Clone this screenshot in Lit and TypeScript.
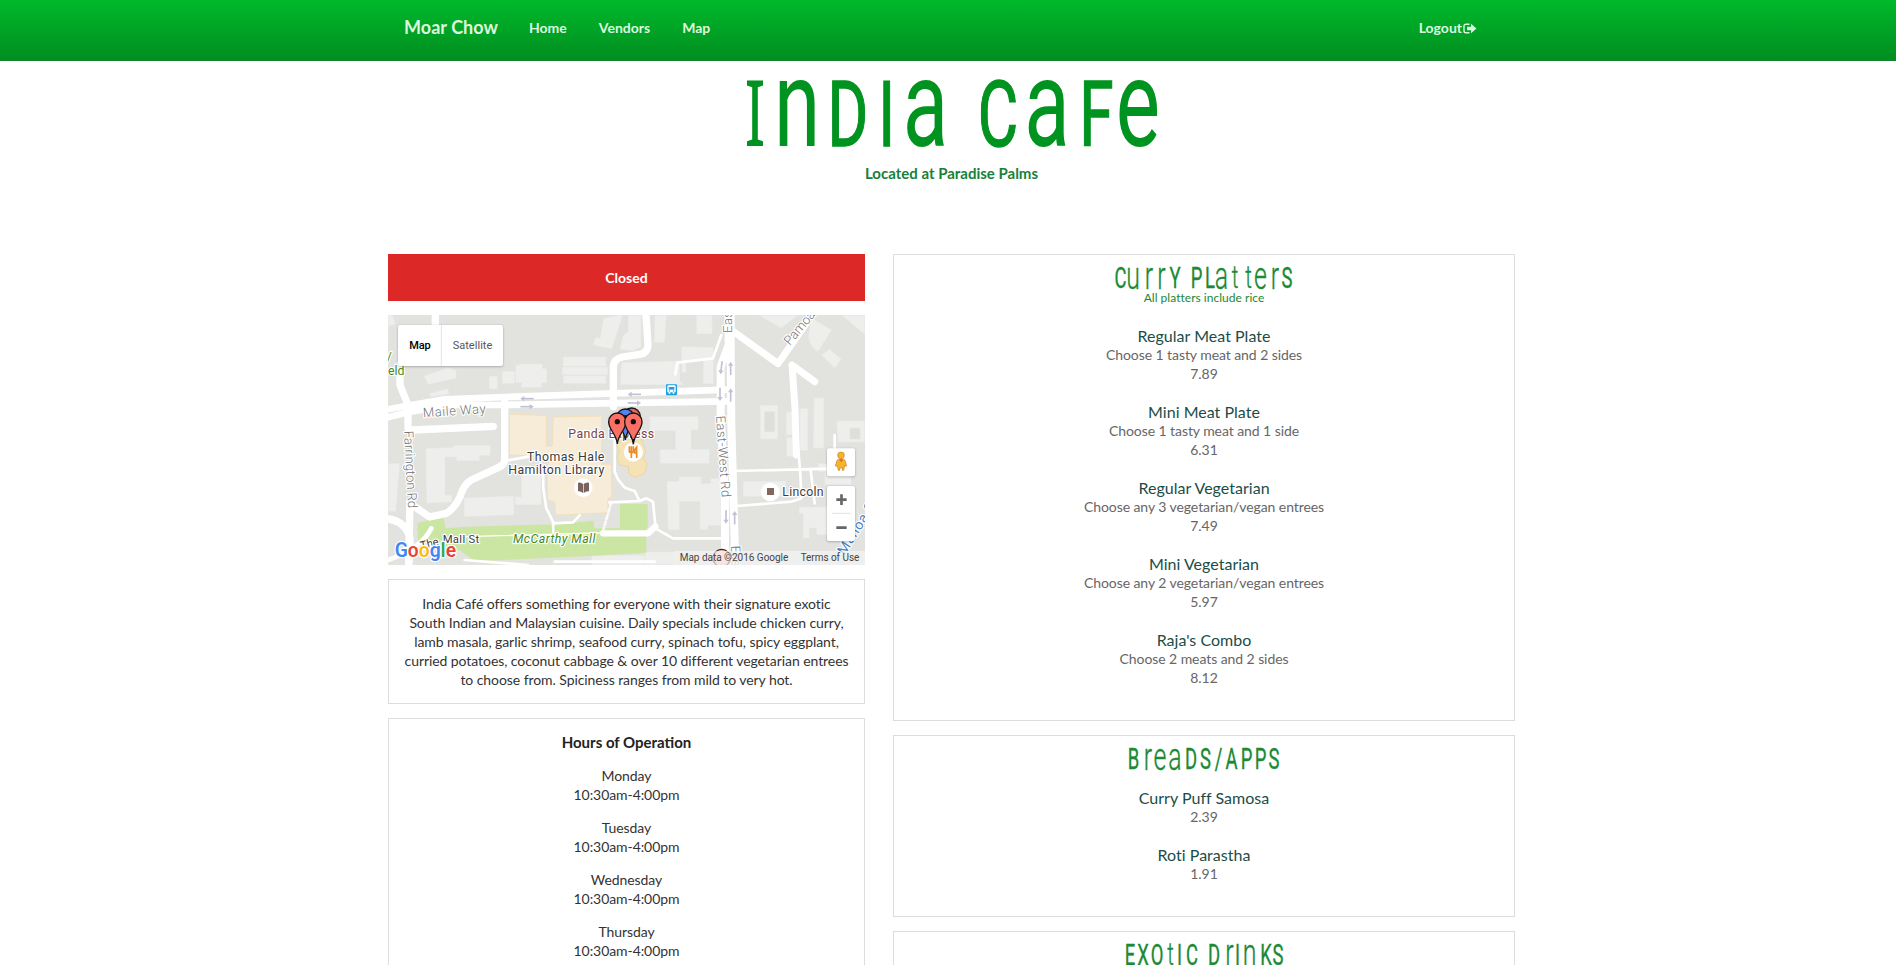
import { LitElement, html, svg, css } from "lit";
import { customElement, property } from "lit/decorators.js";

type Glyph = [char: string, center: number, style?: string];

/* Unicase display lettering: lowercase forms are raised to cap height. */
@customElement("unicase-title")
class UnicaseTitle extends LitElement {
  @property({ attribute: false }) glyphs: Glyph[] = [];
  @property({ type: Number }) width = 0;
  @property({ type: Number }) height = 0;
  @property({ type: Number }) baseline = 0;
  @property({ type: Number }) cap = 20;

  static styles = css`
    :host { display: block; }
    svg { display: block; overflow: visible; margin: 0 auto; }
    text { font-family: Roboto, sans-serif; font-weight: 400; fill: currentColor; stroke: currentColor; text-anchor: middle; }
    .upper { text-transform: uppercase; }
    .slab { font-family: "Noto Sans", sans-serif; }
    .big text { stroke-width: 0; }
    .big .upper { stroke-width: 1.4px; }
    .small text { stroke-width: 0.35px; }
    .small .lower { font-weight: 300; }
  `;

  render() {
    const sx = this.cap > 30 ? 0.68 : 0.64;
    return html`<svg class=${this.cap > 30 ? "big" : "small"} width=${this.width} height=${this.height}>
      <g transform="scale(${sx} 1)"><text y=${this.baseline}>${this.glyphs.map(([c, x, style]) => {
        const kind = style ?? "lower";
        const size = this.cap / (kind === "lower" ? (c === "t" ? 0.64 : 0.528) : 0.711);
        return svg`<tspan class=${kind} x=${x / sx} font-size=${size}>${c}</tspan>`;
      })}</text></g>
    </svg>`;
  }
}

@customElement("campus-map")
class CampusMap extends LitElement {
  static styles = css`
    :host { display: block; height: 250px; background: #e2e3df; }
    svg { display: block; }
    text { font-family: Roboto, sans-serif; }
    .b { fill: #eeeeed; stroke: #e4e4e3; stroke-width: 2; }
    .campus { fill: #f6ecd8; stroke: #f3dfbb; stroke-width: 3; }
    .park { fill: #cbe6a3; }
    .road { fill: none; stroke: #fff; stroke-linejoin: round; stroke-linecap: round; }
    .halo { paint-order: stroke; stroke: #fff; stroke-width: 7; stroke-linejoin: round; }
    .street { fill: #747474; font-size: 39px; font-weight: 300; }
    .place { fill: #3c3c3c; font-size: 37px; }
    .food { fill: #7b4540; font-size: 37px; }
    .green { fill: #3f8a1d; font-size: 37px; }
    .arrow { stroke: #c0c1d2; stroke-width: 5; fill: none; }
    .ui { fill: #fff; filter: drop-shadow(0 2px 3px rgba(0, 0, 0, 0.3)); }
    .note { font-size: 30px; fill: #444; }
    .logo { font-size: 60px; font-weight: 600; font-family: "Open Sans", sans-serif; }
  `;

  private arrow(x: number, y: number, angle: number) {
    return svg`<g class="arrow" transform="translate(${x} ${y}) rotate(${angle})">
      <path d="M-20 0H10"/><path d="M8-8L20 0L8 8Z" fill="#c0c1d2" stroke="none"/></g>`;
  }

  private pin(x: number, y: number, color: string) {
    return svg`<g transform="translate(${x} ${y})">
      <path d="M0 0C-3-32-26-42-26-67A26 26 0 0 1 26-67C26-42 3-32 0 0Z" fill=${color} stroke="#151515" stroke-width="4"/>
      <circle cy="-67" r="8" fill="#151010"/></g>`;
  }

  render() {
    return html`<svg width="477" height="250" viewBox="0 0 1431 750">
      <g class="b">
        <path d="M0 0H14L23 28L0 35ZM108 183L178 158L205 166V190L120 209ZM124 235L180 220L184 237L128 247ZM303 183H329V223H303ZM342 168H382V206H342ZM382 152L400 146H464V160H477V204H462V218H400V204H382Z"/>
        <path d="M525 125H655V155H525ZM522 155H660V181H522ZM525 181H655V206H525ZM646 10L690 0H705L672 103L614 90L622 66L636 70ZM720 0H760V96L735 108L695 103L705 62L720 50ZM700 142L876 137V198L886 210H696Z"/>
        <path d="M113 400L196 397V390H308V422H275V438H205V427H172V540H192V562L115 565ZM0 445H36L24 590H0ZM228 548L378 542V600L228 606ZM400 470H460V570H380V545H400ZM610 720H780V750H610Z"/>
        <path d="M800 0H836L830 83H798ZM925 0H973V57H925ZM880 94L977 97V207H945V138H895V173H880ZM785 304H932V345H910V402H965V446H815V403H862V348H785ZM836 498H872V485H940V505H968V490H1000V632H960V644H935V560H875V645H840ZM1116 270H1170V373H1116ZM1194 290H1215V360H1194ZM1235 280H1260V407H1235ZM1195 367H1218V425H1195ZM1278 248H1308V400H1275ZM1065 498H1195V545H1065ZM1345 317H1431V382H1350ZM1233 575H1323V660H1285V640H1265V670H1245V597H1233ZM1110 0H1230L1180 40ZM1360 0H1431V60ZM1270 8L1332 45L1290 110Q1262 95 1261 60ZM1300 120L1325 102L1360 133L1340 160ZM1290 445H1390V510H1310V470H1290ZM770 710H860V750H770Z"/>
        <path d="M1130 290H1160V350H1130ZM1386 340H1416V372H1386Z" fill="#dedfdb"/>
      </g>
      <path class="campus" d="M364 298L475 301V393H493L495 306L641 303V448H670L672 548L660 550V593L503 601L500 560L478 556V450L493 425L364 420Z"/>
      <path d="M700 375L760 370L768 395L774 410L765 430L778 445L770 475L740 488L722 474V455L695 450L687 425L695 405L685 392Z" fill="#f5e2b5" stroke="#e9cf92" stroke-width="2"/>
      <path class="park" d="M88 625L165 603L173 640L230 635L505 628L617 617L619 640H775V713L620 722L260 739L215 705L90 680ZM696 567H779V640H696Z"/>

      <g class="road">
        <g stroke-width="22">
          <path d="M142 0V80M36 150V210L60 270V340M66 560L62 750M0 612Q50 618 65 665Q70 700 62 750M75 345L316 334"/>
          <path d="M774 0L780 90Q779 115 755 118L703 126Q678 131 676 155V275"/>
          <path d="M350 260V435Q350 450 330 458L250 495Q228 507 216 545Q200 580 175 595L125 606L80 575"/>
        </g>
        <g stroke-width="20">
          <path d="M0 283L50 274L170 253L350 246L1020 224M0 307L60 292L180 270L350 270L1020 259"/>
          <path d="M1022 0V90L998 155V300L1011 550V750M1028 0L1028 100L1030 330L1042 750" stroke-width="24"/>
          <path d="M1030 45L1120 110L1170 146L1258 20M1280 200L1212 150L1221 280L1225 420" stroke-width="21"/>
        </g>
        <g stroke-width="8">
          <path d="M1000 60L975 130L868 143L862 178M1225 340L1237 475L1240 550L1210 560L1045 573M1035 468L1325 461M1268 465L1280 565M1340 360V420"/>
          <path d="M680 310V470L690 493L710 518L740 528L753 555M664 562L755 558L775 550L795 560L802 630M465 470L466 520L475 580L495 620L496 650M496 625L555 622L575 601M350 438L420 425M802 640L855 670H1000M230 735L420 750M500 740H800"/>
          <path d="M230 665L780 650" stroke-width="4"/>
          <path d="M670 562L646 645" stroke-dasharray="12 8" opacity=".8"/>
          <path d="M645 655L780 655L802 635" stroke-width="19"/>
          <path d="M0 735Q100 700 130 640" stroke-width="14"/>
        </g>
      </g>

      ${this.arrow(417, 251, 180)}${this.arrow(417, 275, 0)}${this.arrow(739, 238, 180)}${this.arrow(739, 264, 0)}
      ${this.arrow(1000, 158, 97)}${this.arrow(1028, 160, -90)}${this.arrow(996, 238, 90)}${this.arrow(1028, 240, -90)}
      ${this.arrow(1014, 606, 90)}${this.arrow(1040, 608, -90)}

      <g class="street halo">
        <text transform="translate(106 307) rotate(-4)" textLength="188">Maile Way</text>
        <text transform="translate(48 348) rotate(87)" textLength="232">Farrington Rd</text>
        <text transform="translate(984 303) rotate(86)" textLength="245">East-West Rd</text>
        <text transform="translate(1033 54) rotate(-90)" textLength="80">East</text>
        <text transform="translate(1029 692) rotate(88)">East</text>
        <text transform="translate(1205 93) rotate(-50)">Pamoa Rd</text>
      </g>
      <text transform="translate(1370 722) rotate(-58)" font-size="42" fill="#4c7fc4" class="halo" textLength="190">Manoa St</text>
      <g class="green halo">
        <text x="-4" y="137">/</text><text x="0" y="179">eld</text>
        <text x="375" y="683" font-style="italic" textLength="247">McCarthy Mall</text>
      </g>
      <g class="place halo">
        <text x="417" y="439" textLength="232">Thomas Hale</text>
        <text x="361" y="478" textLength="288">Hamilton Library</text>
        <text transform="translate(100 704) rotate(-14)" font-size="34" textLength="56">The</text>
        <text x="164" y="685" font-size="34" textLength="110">Mall St</text>
        <text x="1183" y="544" textLength="124">Lincoln</text>
      </g>
      <text class="food halo" x="541" y="370" textLength="257">Panda Express</text>

      <circle cx="586" cy="518" r="28" fill="#fff"/>
      <path d="M570 503Q579 501 585 507V534Q579 528 570 529ZM587 507Q594 501 603 503V529Q594 528 587 534Z" fill="#7a635c"/>
      <circle cx="1147" cy="531" r="28" fill="#fff"/><path d="M1137 519H1158V540H1137Z" fill="#83675f"/>
      <g><rect x="834" y="208" width="33" height="33" rx="3" fill="#19a0e8"/><path d="M842 211H860Q863 211 863 215V232H859V236H854V232H847V236H842V232H838V215Q838 211 842 211Z" fill="#fff"/><path d="M842 216H859V224H842Z" fill="#19a0e8"/><circle cx="844" cy="228" r="2" fill="#19a0e8"/><circle cx="857" cy="228" r="2" fill="#19a0e8"/></g>
      ${this.pin(731, 372, "#e8675f")}${this.pin(712, 375, "#5781ee")}${this.pin(688, 387, "#fb7064")}${this.pin(736, 387, "#fb7064")}
      <circle cx="736" cy="411" r="29" fill="#fff" opacity=".97"/>
      <path d="M736 372V388" stroke="#151515" stroke-width="5"/>
      <path d="M724 394V408Q724 413 730 413V429M730 394V413M736 394V408Q736 413 730 413M746 429V396Q738 405 740 414H746" fill="none" stroke="#ee8a22" stroke-width="5"/>
      <circle cx="1001" cy="729" r="26" fill="#ffc1bd" stroke="#2a2222" stroke-width="4"/>

      <g class="logo halo"><text x="20" y="727" textLength="184" lengthAdjust="spacingAndGlyphs"><tspan fill="#4285f4">G</tspan><tspan fill="#ea4335">o</tspan><tspan fill="#fbbc05">o</tspan><tspan fill="#4285f4">g</tspan><tspan fill="#34a853">l</tspan><tspan fill="#ea4335">e</tspan></text></g>
      <rect x="858" y="708" width="573" height="42" fill="#f3f3f3" opacity=".7"/>
      <text class="note" x="875" y="738" textLength="326">Map data ©2016 Google</text>
      <text class="note" x="1238" y="738" textLength="176">Terms of Use</text>

      <rect class="ui" x="30" y="30" width="315" height="123" rx="6"/>
      <path d="M160 30V153" stroke="#e4e4e4" stroke-width="3"/>
      <text x="64" y="102" font-size="33" font-weight="500" fill="#000" textLength="64">Map</text>
      <text x="194" y="102" font-size="33" fill="#565656" textLength="119">Satellite</text>

      <rect class="ui" x="1317" y="400" width="84" height="84" rx="6"/>
      <g fill="#f6b32c" stroke="#c98515" stroke-width="2">
        <path d="M1347 436Q1359 426 1371 436L1376 453H1370L1367 466H1363V459H1355V466H1351L1348 453H1342Z"/>
        <circle cx="1359" cy="421" r="10"/><path d="M1353 433H1366L1360 442Z" fill="#e8622a" stroke="none"/>
      </g>
      <rect class="ui" x="1317" y="513" width="84" height="165" rx="6"/>
      <path d="M1332 595H1388" stroke="#e0e0e0" stroke-width="3"/>
      <path d="M1345 554H1376M1360.500 538V570M1345 638H1376" stroke="#666" stroke-width="8"/>
    </svg>`;
  }
}

interface Item { name: string; detail?: string; price: string; }
interface Section { title: Glyph[]; width: number; note?: string; items: Item[]; }

const U = "upper";
const SECTIONS: Section[] = [
  {
    width: 178,
    title: [["C", 5.500, U], ["u", 18], ["r", 34], ["r", 46.500], ["y", 60, U], ["P", 81.500, U], ["l", 95, U], ["a", 106.500], ["t", 120], ["t", 133.500], ["e", 145.500], ["r", 160], ["s", 172, U]],
    note: "All platters include rice",
    items: [
      { name: "Regular Meat Plate", detail: "Choose 1 tasty meat and 2 sides", price: "7.89" },
      { name: "Mini Meat Plate", detail: "Choose 1 tasty meat and 1 side", price: "6.31" },
      { name: "Regular Vegetarian", detail: "Choose any 3 vegetarian/vegan entrees", price: "7.49" },
      { name: "Mini Vegetarian", detail: "Choose any 2 vegetarian/vegan entrees", price: "5.97" },
      { name: "Raja's Combo", detail: "Choose 2 meats and 2 sides", price: "8.12" },
    ],
  },
  {
    width: 154,
    title: [["B", 6.500, U], ["r", 21], ["e", 33], ["a", 48], ["d", 64, U], ["s", 78.500, U], ["/", 91.500, U], ["A", 104.500, U], ["p", 119.500, U], ["p", 133.500, U], ["s", 147, U]],
    items: [{ name: "Curry Puff Samosa", price: "2.39" }, { name: "Roti Parastha", price: "1.91" }],
  },
  {
    width: 160,
    title: [["E", 6, U], ["x", 19, U], ["o", 33, U], ["t", 46.500], ["i", 55.500, U], ["c", 68, U], ["D", 90, U], ["r", 105.500], ["i", 113.500, U], ["n", 125.500], ["k", 142, U], ["s", 154, U]],
    items: [],
  },
];

const HOURS = ["Monday", "Tuesday", "Wednesday", "Thursday"];

const CAFE: Glyph[] = [
  ["I", 9, "slab"], ["n", 51], ["d", 102, U], ["i", 140.700, U], ["a", 179.500],
  ["C", 252, U], ["a", 301], ["f", 350.500, U], ["e", 392],
];

@customElement("app-root")
class AppRoot extends LitElement {
  static styles = css`
    :host {
      display: block; height: 965px; overflow: hidden; background: #fff;
      font-family: Lato, sans-serif; font-size: 14px; line-height: 19px; color: #333;
    }
    nav {
      box-sizing: border-box; height: 61px; padding: 0 419px 6px 404px;
      display: flex; align-items: center; color: #dcf8df; font-weight: 700;
      background: linear-gradient(#00b92b, #008e20); border-bottom: 1px solid #138030;
    }
    .brand { font-size: 18px; width: 125px; letter-spacing: 0.05px; padding-top: 1px; }
    .links { display: flex; gap: 32px; flex: 1; }
    .logout { display: flex; align-items: center; gap: 1px; }
    .logout svg { margin-top: 3px; }
    header { box-sizing: border-box; width: 1127px; margin-left: 388px; height: 193px; text-align: center; color: #00931f; }
    .location { font-size: 15px; font-weight: 700; color: #17803a; margin-top: 2px; }
    main { margin-left: 388px; display: grid; grid-template-columns: 477px 622px; column-gap: 28px; align-items: start; }
    .column { display: grid; gap: 14px; text-align: center; }
    .status { height: 47px; line-height: 47px; background: #dd2828; color: #fff; font-weight: 700; }
    .card { border: 1px solid #dcdddd; padding: 14px; letter-spacing: -0.07px; }
    .menu { padding: 0 14px 14px; }
    .menu unicase-title { color: #1a8a33; letter-spacing: 0; }
    .note { font-size: 12px; color: #1a8a33; margin: -1px 0 1px; letter-spacing: 0.03px; }
    .items { padding-top: 18px; }
    .item { padding-bottom: 19px; color: #666; }
    .name { font-size: 16px; color: #1b4d47; letter-spacing: 0.02px; }
    .heading { font-size: 15px; font-weight: 700; color: #222; margin-bottom: 14px; letter-spacing: 0; }
    .day { margin-bottom: 14px; }
  `;

  render() {
    return html`
      <nav>
        <span class="brand">Moar Chow</span>
        <div class="links"><span>Home</span><span>Vendors</span><span>Map</span></div>
        <span class="logout">Logout<svg width="14" height="12" viewBox="0 0 14 12">
          <path d="M6.500 1.200H3Q1 1.200 1 3V8Q1 9.800 3 9.800H6.500" fill="none" stroke="currentColor" stroke-width="1.400"/>
          <path d="M4 3.700H8V.8L13.500 5.500L8 10.200V7.300H4Z" fill="currentColor"/>
        </svg></span>
      </nav>
      <header>
        <unicase-title .glyphs=${CAFE} width="411" height="101" baseline="85" cap="65"></unicase-title>
        <div class="location">Located at Paradise Palms</div>
      </header>
      <main>
        <div class="column">
          <div class="status">Closed</div>
          <campus-map></campus-map>
          <div class="card">India Café offers something for everyone with their signature exotic South Indian and Malaysian cuisine. Daily specials include chicken curry, lamb masala, garlic shrimp, seafood curry, spinach tofu, spicy eggplant, curried potatoes, coconut cabbage &amp; over 10 different vegetarian entrees to choose from. Spiciness ranges from mild to very hot.</div>
          <div class="card">
            <div class="heading">Hours of Operation</div>
            ${HOURS.map((d) => html`<div class="day">${d}<br />10:30am-4:00pm</div>`)}
          </div>
        </div>
        <div class="column">
          ${SECTIONS.map((s) => html`<section class="card menu">
            <unicase-title .glyphs=${s.title} width=${s.width} height="34" baseline="33.500" cap="20.500"></unicase-title>
            ${s.note ? html`<div class="note">${s.note}</div>` : ""}
            <div class="items">${s.items.map((i) => html`<div class="item">
              <div class="name">${i.name}</div>
              ${i.detail ? html`<div>${i.detail}</div>` : ""}
              <div>${i.price}</div>
            </div>`)}</div>
          </section>`)}
        </div>
      </main>
    `;
  }
}
